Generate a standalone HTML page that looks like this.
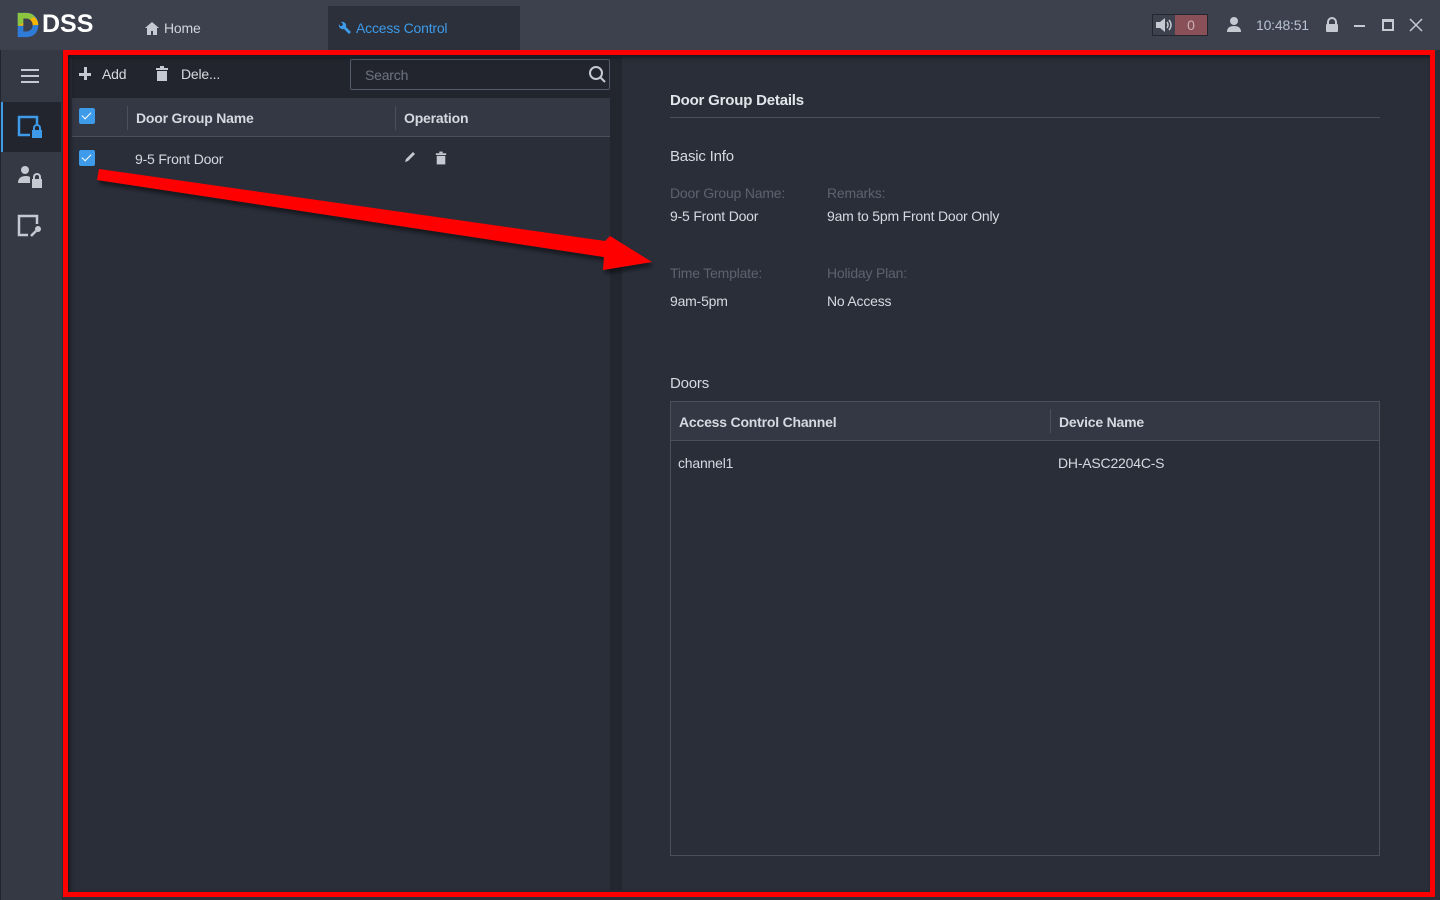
<!DOCTYPE html>
<html><head><meta charset="utf-8"><style>
*{margin:0;padding:0;box-sizing:border-box}
body{width:1440px;height:900px;background:#2a2e39;font-family:"Liberation Sans",sans-serif;position:relative;overflow:hidden;color:#d6d9e0}
.a{position:absolute}
.t{font-size:14px;white-space:nowrap;letter-spacing:-0.2px}
.lab{color:#5d6270;font-size:14px;letter-spacing:-0.2px}
.cb{width:16px;height:16px;background:#3d9be9;border-radius:2px}
.cb:after{content:"";position:absolute;left:5px;top:2px;width:4px;height:8px;border:solid #fff;border-width:0 1.5px 1.5px 0;transform:rotate(45deg)}
</style></head><body>
<div class="a" style="left:0;top:0;width:1440px;height:50px;background:#3c414d"></div>
<svg class="a" style="left:14px;top:11px" width="28" height="28" viewBox="0 0 28 30"><path d="M3 2h9c8 0 13 5 13 13s-5 13-13 13H3z" fill="#2e7bd8"/><path d="M3 2h9c4 0 7 1 9 4L3 16z" fill="#8cc63f"/><path d="M3 16l18-10c2 2 4 5 4 9z" fill="#f7b500"/><path d="M9 8h3c4 0 7 3 7 7s-3 7-7 7H9z" fill="#3c414d"/></svg>
<div class="a" style="left:42px;top:10px;font-size:25px;font-weight:bold;color:#fff">DSS</div>
<svg class="a" style="left:145px;top:22px" width="14" height="13" viewBox="0 0 14 13"><path d="M7 0L0 6h2v7h4V9h2v4h4V6h2z" fill="#c5c9d2"/></svg>
<div class="a t" style="left:164px;top:20px;color:#d0d4dc">Home</div>
<div class="a" style="left:328px;top:6px;width:192px;height:44px;background:#2c303b"></div>
<svg class="a" style="left:337px;top:21px" width="14" height="14" viewBox="0 0 14 14"><path d="M2 3a4 4 0 0 0 5 5l5 5 2-2-5-5a4 4 0 0 0-5-5l2 2-1 2-2-0z" fill="#3d9be9"/></svg>
<div class="a t" style="left:356px;top:20px;color:#3d9be9">Access Control</div>
<div class="a" style="left:1152px;top:14px;width:56px;height:22px;border:1px solid #23262e;background:#3c414d"></div>
<div class="a" style="left:1175px;top:15px;width:32px;height:20px;background:#8a5058;color:#c9b2b8;font-size:14px;text-align:center;line-height:20px">0</div>
<svg class="a" style="left:1155px;top:17px" width="18" height="16" viewBox="0 0 18 16"><path d="M1 5h4l5-4v14l-5-4H1z" fill="#c5c9d2"/><path d="M12 5q2 3 0 6M14 3q4 5 0 10" stroke="#c5c9d2" stroke-width="1.5" fill="none"/></svg>
<svg class="a" style="left:1226px;top:17px" width="16" height="15" viewBox="0 0 16 15"><circle cx="8" cy="4" r="4" fill="#c5c9d2"/><path d="M1 15q0-6 7-6t7 6z" fill="#c5c9d2"/></svg>
<div class="a t" style="left:1256px;top:17px;color:#b8c2d2">10:48:51</div>
<svg class="a" style="left:1325px;top:17px" width="14" height="15" viewBox="0 0 14 15"><path d="M3 7V5a4 4 0 0 1 8 0v2" stroke="#c5c9d2" stroke-width="2" fill="none"/><rect x="1" y="7" width="12" height="8" rx="1" fill="#c5c9d2"/></svg>
<div class="a" style="left:1354px;top:25px;width:11px;height:1.5px;background:#c5c9d2"></div>
<div class="a" style="left:1382px;top:19px;width:12px;height:12px;border:2px solid #c5c9d2;border-top-width:3px"></div>
<svg class="a" style="left:1409px;top:18px" width="14" height="14"><path d="M1 1L13 13M13 1L1 13" stroke="#c5c9d2" stroke-width="1.5"/></svg>
<div class="a" style="left:0;top:50px;width:62px;height:850px;background:#343944;border-left:1px solid #22252e"></div>
<div class="a" style="left:21px;top:69px;width:18px;height:2px;background:#c5c9d2;box-shadow:0 6px 0 #c5c9d2,0 12px 0 #c5c9d2"></div>
<div class="a" style="left:1px;top:102px;width:60px;height:50px;background:#22252e;border-left:2px solid #3d9be9"></div>
<svg class="a" style="left:17px;top:115px" width="30" height="26" viewBox="0 0 30 26"><path d="M13 20H2V2h18v7" stroke="#3d9be9" stroke-width="2.5" fill="none"/><path d="M17 15v-2a3 3 0 0 1 6 0v2" stroke="#3d9be9" stroke-width="2" fill="none"/><rect x="15" y="15" width="10" height="8" fill="#3d9be9"/></svg>
<svg class="a" style="left:17px;top:164px" width="30" height="26" viewBox="0 0 30 26"><circle cx="8" cy="6" r="4" fill="#c5c9d2"/><path d="M1 19q0-7 8-7 3 0 4 1v6z" fill="#c5c9d2"/><path d="M17 15v-2a3 3 0 0 1 6 0v2" stroke="#c5c9d2" stroke-width="2" fill="none"/><rect x="15" y="15" width="10" height="9" fill="#c5c9d2"/></svg>
<svg class="a" style="left:17px;top:214px" width="30" height="26" viewBox="0 0 30 26"><path d="M11 21H2V2h18v8" stroke="#c5c9d2" stroke-width="2.5" fill="none"/><circle cx="21" cy="15" r="3" fill="#c5c9d2"/><path d="M19 17l-5 5" stroke="#c5c9d2" stroke-width="2.5"/></svg>
<div class="a" style="left:72px;top:57px;width:538px;height:833px;background:#2a2e39"></div>
<div class="a" style="left:610px;top:57px;width:12px;height:833px;background:#23262f"></div>
<div class="a" style="left:72px;top:57px;width:538px;height:41px;background:#22252e"></div>
<div class="a" style="left:79px;top:73px;width:12px;height:3px;background:#c5c9d2"></div>
<div class="a" style="left:84px;top:67px;width:3px;height:13px;background:#c5c9d2"></div>
<div class="a t" style="left:102px;top:66px;color:#d6d9e0">Add</div>
<svg class="a" style="left:155px;top:66px" width="14" height="15" viewBox="0 0 14 15"><rect x="1" y="2" width="12" height="2" fill="#c5c9d2"/><rect x="5" y="0" width="4" height="2" fill="#c5c9d2"/><path d="M2 5h10v10H2z" fill="#c5c9d2"/></svg>
<div class="a t" style="left:181px;top:66px">Dele...</div>
<div class="a" style="left:350px;top:59px;width:260px;height:31px;border:1px solid #555b68;border-radius:2px;background:#22252e"></div>
<div class="a t" style="left:365px;top:67px;color:#6e7380">Search</div>
<svg class="a" style="left:588px;top:65px" width="18" height="18"><circle cx="8" cy="8" r="6" stroke="#c5c9d2" stroke-width="2" fill="none"/><path d="M12 12l5 5" stroke="#c5c9d2" stroke-width="2"/></svg>
<div class="a" style="left:72px;top:98px;width:538px;height:39px;background:#343845;border-bottom:1px solid #4a4f5c"></div>
<div class="a" style="left:127px;top:106px;width:1px;height:24px;background:#4a4f5c"></div>
<div class="a" style="left:395px;top:106px;width:1px;height:24px;background:#4a4f5c"></div>
<div class="a cb" style="left:79px;top:108px"></div>
<div class="a t" style="left:136px;top:110px;font-weight:bold;color:#d6d9e0">Door Group Name</div>
<div class="a t" style="left:404px;top:110px;font-weight:bold">Operation</div>
<div class="a cb" style="left:79px;top:150px"></div>
<div class="a t" style="left:135px;top:151px">9-5 Front Door</div>
<svg class="a" style="left:404px;top:151px" width="12" height="12"><path d="M1 11l1-3 7-7 2 2-7 7z" fill="#c5c9d2"/></svg>
<svg class="a" style="left:435px;top:151px" width="12" height="14" viewBox="0 0 14 15"><rect x="1" y="2" width="12" height="2" fill="#c5c9d2"/><rect x="5" y="0" width="4" height="2" fill="#c5c9d2"/><path d="M2 5h10v10H2z" fill="#c5c9d2"/></svg>
<div class="a t" style="left:670px;top:92px;font-size:15px;font-weight:bold;color:#e2e5ea">Door Group Details</div>
<div class="a" style="left:670px;top:117px;width:710px;height:1px;background:#4a4f5c"></div>
<div class="a t" style="left:670px;top:148px;font-size:15px">Basic Info</div>
<div class="a lab" style="left:670px;top:185px">Door Group Name:</div>
<div class="a lab" style="left:827px;top:185px">Remarks:</div>
<div class="a t" style="left:670px;top:208px">9-5 Front Door</div>
<div class="a t" style="left:827px;top:208px">9am to 5pm Front Door Only</div>
<div class="a lab" style="left:670px;top:265px">Time Template:</div>
<div class="a lab" style="left:827px;top:265px">Holiday Plan:</div>
<div class="a t" style="left:670px;top:293px">9am-5pm</div>
<div class="a t" style="left:827px;top:293px">No Access</div>
<div class="a t" style="left:670px;top:375px;font-size:15px">Doors</div>
<div class="a" style="left:670px;top:401px;width:710px;height:455px;border:1px solid #4a4f5c"></div>
<div class="a" style="left:671px;top:402px;width:708px;height:39px;background:#343845;border-bottom:1px solid #4a4f5c"></div>
<div class="a" style="left:1050px;top:409px;width:1px;height:24px;background:#4a4f5c"></div>
<div class="a t" style="left:679px;top:414px;font-weight:bold">Access Control Channel</div>
<div class="a t" style="left:1059px;top:414px;font-weight:bold">Device Name</div>
<div class="a t" style="left:678px;top:455px">channel1</div>
<div class="a t" style="left:1058px;top:455px">DH-ASC2204C-S</div>
<div class="a" style="left:63px;top:50px;width:1372px;height:847px;border:5px solid #ff0000;box-shadow:inset 2px 2px 4px rgba(0,0,0,.5)"></div>
<svg class="a" style="left:0;top:0" width="1440" height="900"><defs><filter id="s"><feDropShadow dx="2" dy="4" stdDeviation="2" flood-color="#000" flood-opacity=".5"/></filter></defs>
<polygon filter="url(#s)" fill="#ff0000" points="99,169 605,241 610,236 652,262 603,270 604,257 97,180"/></svg>
</body></html>
